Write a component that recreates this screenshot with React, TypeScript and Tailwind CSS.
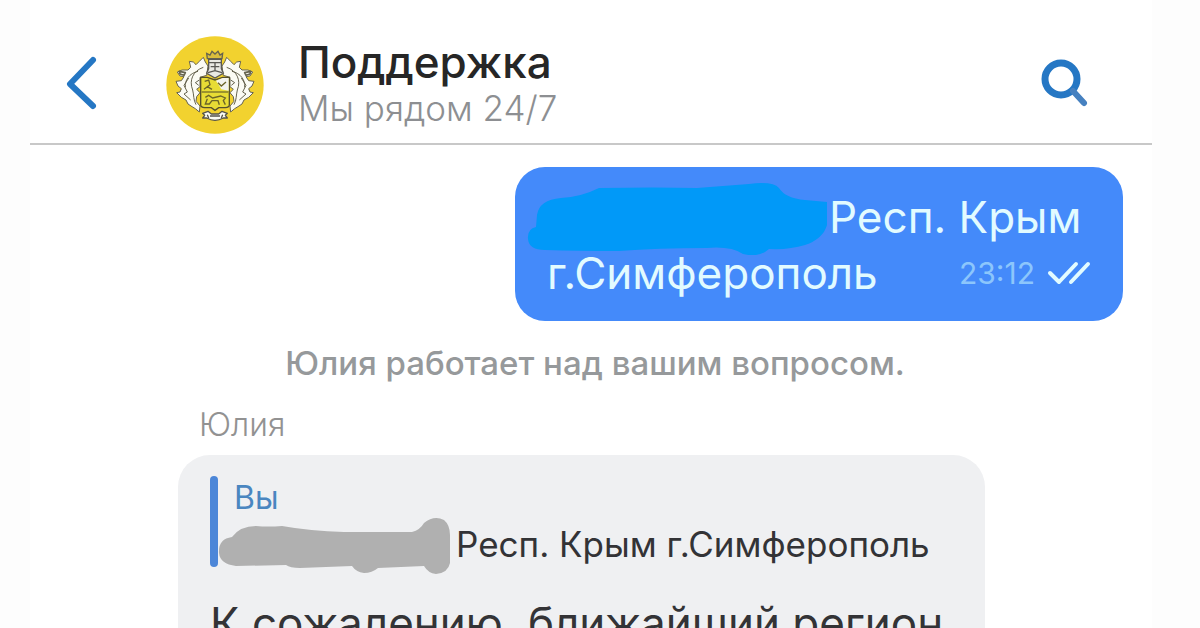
import type { ReactNode } from 'react';

// Left half of the acanthus mantling, the right half is mirrored
const Mantling = () => (
  <g fill="#fbfbf4" stroke="#66634f" strokeWidth="3" strokeLinejoin="round">
    <path d="M176 134 L168 122 L162 108 L150 120 L140 130 L132 122 L120 120 L124 138 L116 146 L98 146 L84 152 L92 164 L104 166 L96 178 L80 180 L86 194 L96 202 L92 212 L82 214 L96 228 L110 236 L116 248 L128 256 L138 262 L150 272 L152 254 L140 240 L142 226 L152 214 L142 204 L152 196 L152 168 L172 162 Z" />
    <path fill="none" d="M162 138 C132 148 118 176 130 206 C134 222 132 236 140 250" />
    <path fill="none" d="M146 150 C120 156 106 176 108 198 M118 170 L104 192 L114 212 L104 218 L124 236 M150 176 L138 184 L148 192" />
    <path fill="none" strokeWidth="5" d="M90 150 L108 154 L104 162 L92 158 Z" />
  </g>
);

const Crest = () => (
  <svg viewBox="50 44 294 294" className="size-[98px] shrink-0" role="img" aria-label="Логотип">
    <circle cx="197" cy="191" r="146" fill="#f2d22f" />
    <Mantling />
    <g transform="translate(394 0) scale(-1 1)">
      <Mantling />
    </g>
    {/* helmet and crown */}
    <path d="M174 112 L172 96 L182 101 L188 90 L197 98 L206 90 L212 101 L220 96 L218 112 Z" fill="#d9bd3c" stroke="#66634f" strokeWidth="4" />
    <path d="M178 114 H216 V142 L222 156 L197 170 L172 156 L178 142 Z" fill="#e9e9e3" stroke="#5a5954" strokeWidth="4" />
    <path d="M178 124 H216 M197 122 V150 M184 136 H210 M176 154 L197 148 L218 154" fill="none" stroke="#5a5954" strokeWidth="4" />
    {/* shield */}
    <path d="M154 168 L174 168 L197 176 L220 168 L240 168 V250 Q240 258 228 259 H208 L197 267 L186 259 H166 Q154 258 154 250 Z" fill="#e8dc35" stroke="#55502e" strokeWidth="4" />
    <path d="M200 178 L220 170 H238 V208 L216 204 L208 190 Z" fill="#f3f3ee" />
    <path d="M157 212 H237" stroke="#77702c" strokeWidth="4" />
    <path d="M166 180 L178 176 L182 190 L174 196 L188 204 M164 204 L174 196 M206 184 L216 194 L230 182 M168 228 L178 222 L190 230 L214 224 L228 230 L222 238 L228 250 M174 232 L168 248 H180 L188 238 L206 238 L210 250" fill="none" stroke="#6b6428" strokeWidth="4" />
    {/* ribbon */}
    <path d="M160 276 L176 270 L186 278 H208 L218 270 L234 276 L228 282 L234 290 H222 Q197 304 172 290 H160 L166 282 Z" fill="#fbfbf4" stroke="#55534a" strokeWidth="4" strokeLinejoin="round" />
    <path d="M182 284 H212 M174 280 L178 290 M220 280 L216 290" stroke="#55534a" strokeWidth="4" />
  </svg>
);

const BackIcon = () => (
  <svg viewBox="0 0 34 54" className="h-[54px] w-[34px]" fill="none" stroke="#2577c4" strokeWidth="6" strokeLinecap="round" strokeLinejoin="round">
    <path d="M29 4 L6 28 L29 50" />
  </svg>
);

const SearchIcon = () => (
  <svg viewBox="0 0 50 50" className="size-[50px]" fill="none" stroke="#2577c4">
    <circle cx="21" cy="21" r="16" strokeWidth="7" />
    <path d="M33 33 L44 45" stroke="#4681c0" strokeWidth="6" strokeLinecap="round" />
  </svg>
);

const ReadIcon = () => (
  <svg viewBox="0 0 44 24" className="h-6 w-11" fill="none" stroke="#e2fbff" strokeWidth="4" strokeLinecap="round" strokeLinejoin="round">
    <path d="M3 12 L12 21 L29 3" />
    <path d="M24 21 L41 3" />
  </svg>
);

const BlueMarker = () => (
  <svg viewBox="0 0 302 76" className="h-[76px] w-[302px] shrink-0" fill="#0199f8">
    <path d="M10 36 Q12 21 34 19 Q54 18 72 9 Q130 8 170 9 L222 5 Q246 2 252 9 Q258 19 278 21 L300 23 V46 Q296 60 278 66 Q262 71 242 70 Q232 79 216 75 Q204 67 180 69 Q130 69 92 72 Q50 72 18 71 Q2 71 1 60 Q0 50 9 48 Z" />
  </svg>
);

const GreyMarker = () => (
  <svg viewBox="0 0 234 58" className="h-[58px] w-[234px] shrink-0" fill="#b0b0b0">
    <path d="M1 36 Q0 22 14 20 Q22 9 38 9 Q50 10 64 9 Q92 14 126 15 L194 15 Q202 13 206 6 Q216 -2 226 3 Q232 8 232 18 V46 Q230 56 218 57 Q210 56 206 49 L160 51 Q154 56 146 56 Q138 55 134 49 L82 51 Q72 51 68 48 L18 49 Q2 47 1 36 Z" />
  </svg>
);

const Note = ({ children }: { children: ReactNode }) => (
  <p className="pl-2 text-center text-[33px] leading-10 font-medium text-[#96999b]">{children}</p>
);

const Header = () => (
  <header className="flex h-[145px] items-center border-b-2 border-[#c8c8c8] pt-[22px] pr-[62px] pl-[34px]">
    <button type="button" aria-label="Назад" className="shrink-0">
      <BackIcon />
    </button>
    <div className="ml-[68px] pt-1">
      <Crest />
    </div>
    <div className="ml-[34px] flex-1">
      <h1 className="text-[44px] leading-[50px] font-medium text-[#262626]">Поддержка</h1>
      <p className="text-[35px] leading-[42px] font-light text-[#8d8f92]">Мы рядом 24/7</p>
    </div>
    <button type="button" aria-label="Поиск" className="shrink-0">
      <SearchIcon />
    </button>
  </header>
);

const MyMessage = () => (
  <article className="ml-auto w-[608px] rounded-[30px] bg-[#448afa] pt-[22px] pb-5 text-[44px] leading-14 text-[#e2fbff]">
    <div className="flex h-14 items-center pl-3">
      <BlueMarker />
      <span className="whitespace-nowrap">Респ. Крым</span>
    </div>
    <div className="flex h-14 items-center justify-between px-8">
      <span>г.Симферополь</span>
      <span className="flex items-center gap-3 text-[30px] text-[#8cc6fc]">
        <time>23:12</time>
        <ReadIcon />
      </span>
    </div>
  </article>
);

const SupportMessage = () => (
  <article className="w-[807px] rounded-t-[32px] bg-[#eff0f2] px-8 pt-[21px] text-[#333336]">
    <blockquote className="flex">
      <div className="h-[91px] w-2 shrink-0 rounded-full bg-[#4c86d8]" />
      <div className="text-[35px]">
        <p className="pt-[3px] pl-4 text-[32px] leading-[38px] text-[#4a86c0]">Вы</p>
        <div className="flex items-center gap-1">
          <GreyMarker />
          <span className="pb-1 whitespace-nowrap">Респ. Крым г.Симферополь</span>
        </div>
      </div>
    </blockquote>
    <p className="mt-5 text-[44px] leading-14 whitespace-nowrap">К сожалению, ближайший регион</p>
  </article>
);

export default function App() {
  return (
    <div className="h-screen overflow-hidden bg-[#fdfdfd] pr-12 pl-[30px] font-['Inter','Liberation_Sans',sans-serif]">
      <div className="h-full bg-white">
        <Header />
        <main className="pt-[22px]">
          <div className="pr-[29px]">
            <MyMessage />
          </div>
          <div className="mt-[22px]">
            <Note>Юлия работает над вашим вопросом.</Note>
          </div>
          <section className="mt-[22px] pl-[148px]">
            <h2 className="pl-[21px] text-[32px] leading-10 font-light text-[#929292]">Юлия</h2>
            <div className="mt-[10px]">
              <SupportMessage />
            </div>
          </section>
        </main>
      </div>
    </div>
  );
}
